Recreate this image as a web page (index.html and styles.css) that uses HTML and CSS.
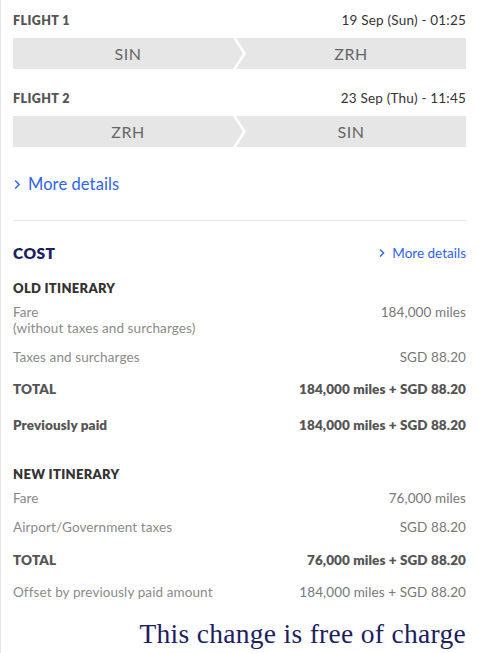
FILE: index.html
```html
<!DOCTYPE html>
<html>
<head>
<meta charset="utf-8">
<link rel="stylesheet" href="styles.css">
</head>
<body>
<div class="page">
  <section class="flight">
    <div class="flight-head">
      <span class="flight-title">FLIGHT 1</span>
      <span class="flight-date">19 Sep (Sun) - 01:25</span>
    </div>
    <div class="route">
      <div class="seg seg-from">SIN</div>
      <div class="seg seg-to">ZRH</div>
    </div>
  </section>
  <section class="flight">
    <div class="flight-head">
      <span class="flight-title">FLIGHT 2</span>
      <span class="flight-date">23 Sep (Thu) - 11:45</span>
    </div>
    <div class="route">
      <div class="seg seg-from">ZRH</div>
      <div class="seg seg-to">SIN</div>
    </div>
  </section>
  <a class="more-big" href="#"><svg class="chev" width="7" height="11" viewBox="0 0 7 11"><polyline points="1.2,1.5 5.2,5.5 1.2,9.5" fill="none" stroke="currentColor" stroke-width="1.4"/></svg>More details</a>
  <hr class="divider">
  <div class="cost-head">
    <span class="cost-title">COST</span>
    <a class="more-small" href="#"><svg class="chev-s" width="6" height="10" viewBox="0 0 6 10"><polyline points="1,1.5 4.6,5 1,8.5" fill="none" stroke="currentColor" stroke-width="1.4"/></svg>More details</a>
  </div>
  <div class="itin-title">OLD ITINERARY</div>
  <div class="row first">
    <span class="lbl">Fare<br>(without taxes and surcharges)</span>
    <span class="val">184,000 miles</span>
  </div>
  <div class="row">
    <span class="lbl">Taxes and surcharges</span>
    <span class="val">SGD 88.20</span>
  </div>
  <div class="row bold">
    <span class="lbl">TOTAL</span>
    <span class="val">184,000 miles + SGD 88.20</span>
  </div>
  <div class="row bold prev">
    <span class="lbl">Previously paid</span>
    <span class="val">184,000 miles + SGD 88.20</span>
  </div>
  <div class="itin-title new">NEW ITINERARY</div>
  <div class="row first">
    <span class="lbl">Fare</span>
    <span class="val">76,000 miles</span>
  </div>
  <div class="row">
    <span class="lbl">Airport/Government taxes</span>
    <span class="val">SGD 88.20</span>
  </div>
  <div class="row bold total-new">
    <span class="lbl">TOTAL</span>
    <span class="val">76,000 miles + SGD 88.20</span>
  </div>
  <div class="row after-bold">
    <span class="lbl">Offset by previously paid amount</span>
    <span class="val">184,000 miles + SGD 88.20</span>
  </div>
  <div class="free">This change is free of charge</div>
</div>
</body>
</html>
```
FILE: styles.css
```css
html, body {
  margin: 0;
  padding: 0;
  background: #fff;
}
body {
  font-family: Lato, "Open Sans", sans-serif;
  width: 478px;
  height: 653px;
  overflow: hidden;
}
.page {
  border-left: 1px solid #e4e4e4;
  padding: 12px 12px 0 12px;
  height: 653px;
  box-sizing: border-box;
}
.flight-head {
  display: flex;
  justify-content: space-between;
  align-items: baseline;
  height: 26px;
  line-height: 16px;
}
.flight-title {
  font-size: 12.5px;
  font-weight: 800;
  color: #555;
  letter-spacing: 0.4px;
}
.flight-date {
  font-size: 13.5px;
  color: #333;
  letter-spacing: 0.2px;
}
.route {
  display: flex;
  height: 31px;
}
.flight + .flight {
  margin-top: 21px;
}
.seg {
  background: #e6e6e6;
  color: #666;
  font-size: 16px;
  display: flex;
  align-items: center;
  justify-content: center;
  letter-spacing: 0.6px;
}
.seg-from {
  flex: 0 0 230px;
  clip-path: polygon(0 0, calc(100% - 10px) 0, 100% 50%, calc(100% - 10px) 100%, 0 100%);
}
.seg-to {
  flex: 1;
  margin-left: -7px;
  clip-path: polygon(0 0, 100% 0, 100% 100%, 0 100%, 10px 50%);
}
.more-big {
  display: flex;
  align-items: center;
  margin-top: 27px;
  color: #2d63f0;
  font-size: 16.5px;
  line-height: 20px;
  text-decoration: none;
  letter-spacing: 0.1px;
}
.chev {
  margin: 1px 7px 0 1px;
}
.chev-s {
  margin: 0 7px 0 0;
}
.divider {
  border: 0;
  border-top: 1px solid #e8e8e8;
  margin: 26px 0 0 0;
}
.cost-head {
  display: flex;
  justify-content: space-between;
  align-items: center;
  margin-top: 23px;
  line-height: 18px;
}
.cost-title {
  font-size: 15.5px;
  font-weight: 800;
  color: #1b2160;
  letter-spacing: 0.5px;
}
.more-small {
  display: flex;
  align-items: center;
  color: #2d63f0;
  font-size: 13.5px;
  text-decoration: none;
}
.itin-title {
  font-size: 13px;
  font-weight: 800;
  color: #333;
  margin-top: 18px;
  line-height: 16px;
  letter-spacing: 0.3px;
}
.itin-title.new {
  margin-top: 33px;
}
.row {
  display: flex;
  justify-content: space-between;
  align-items: flex-start;
  font-size: 13.5px;
  line-height: 16px;
  margin-top: 13px;
  letter-spacing: 0.1px;
}
.row.first {
  margin-top: 8px;
}
.lbl {
  color: #8a8a8a;
}
.val {
  color: #777;
  text-align: right;
}
.row.bold .lbl,
.row.bold .val {
  font-weight: 800;
  color: #555;
}
.row.bold {
  margin-top: 16px;
}
.row.bold.prev {
  margin-top: 20px;
}
.row.bold.total-new {
  margin-top: 17px;
}
.row.after-bold {
  margin-top: 16px;
}
.free {
  text-align: right;
  font-family: "Liberation Serif", serif;
  color: #1b2160;
  font-size: 27.5px;
  line-height: 32px;
  margin-top: 18px;
  letter-spacing: 0.3px;
}
```
